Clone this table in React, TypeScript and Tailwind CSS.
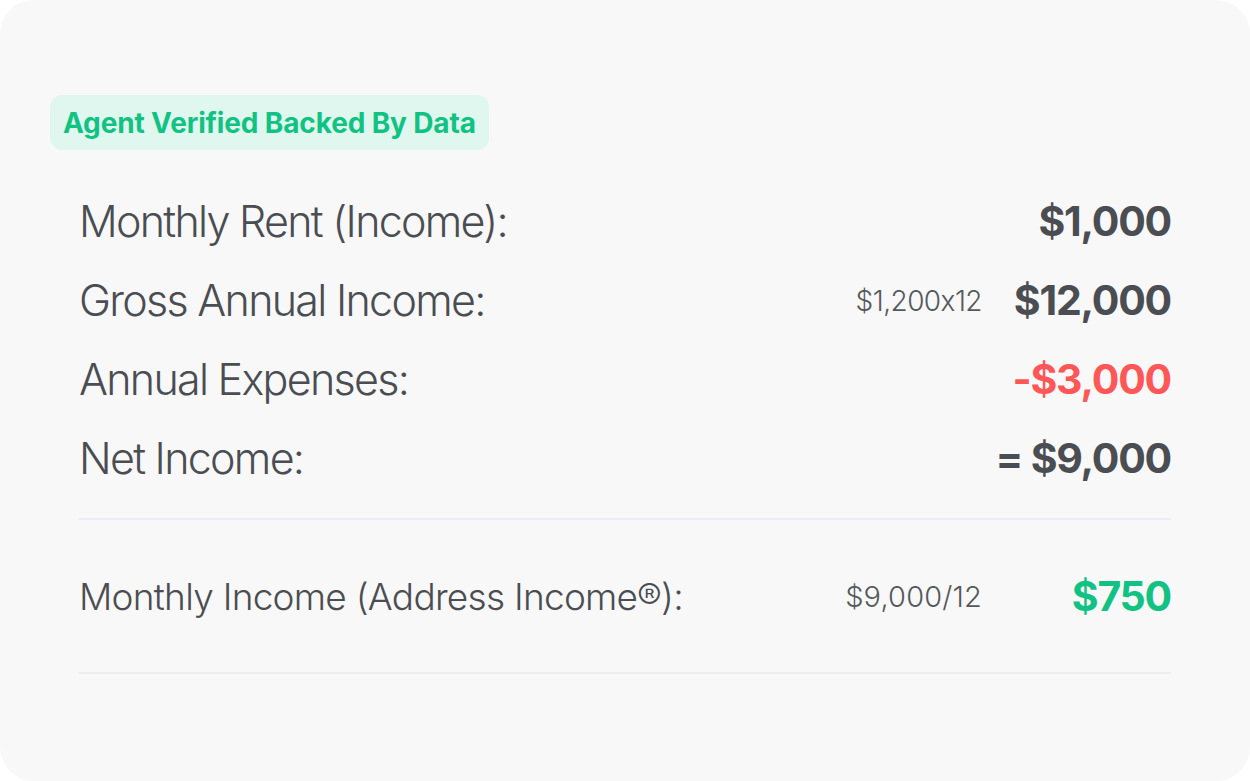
const rows = [
  { label: "Monthly Rent (Income):", note: "", value: "$1,000", tone: "text-[#4a4d52]" },
  { label: "Gross Annual Income:", note: "$1,200x12", value: "$12,000", tone: "text-[#4a4d52]" },
  { label: "Annual Expenses:", note: "", value: "-$3,000", tone: "text-[#ff5757]" },
  { label: "Net Income:", note: "", value: "= $9,000", tone: "text-[#4a4d52]" },
];

function Row({ label, note, value, tone, small }: { label: string; note: string; value: string; tone: string; small?: boolean }) {
  return (
    <div className="grid grid-cols-[1fr_auto_189px] items-center h-[79px]">
      <span
        className={
          small
            ? "text-[37px] font-light tracking-[-0.02em] text-[#4a4d52]"
            : "text-[43px] font-light tracking-[-0.04em] text-[#4a4d52]"
        }
      >
        {label}
      </span>
      <span
        className={
          small
            ? "text-[29px] font-light tracking-[0.005em] text-[#55585d]"
            : "text-[28px] font-light tracking-[-0.02em] text-[#55585d]"
        }
      >
        {note}
      </span>
      <span className={`text-right text-[41px] font-bold tracking-[-0.03em] ${tone}`}>{value}</span>
    </div>
  );
}

export default function App() {
  return (
    <div className="w-[1250px] h-[781px] bg-white" style={{ fontFamily: "Inter, 'Noto Sans', sans-serif" }}>
      <div className="w-full h-full rounded-[34px] bg-[#f8f8f8] flex flex-col">
        <div className="mt-[95px] ml-[50px] self-start h-[55px] px-[13px] rounded-[12px] bg-[#dff7ee] flex items-center">
          <span className="text-[28px] font-bold tracking-[-0.005em] text-[#12c283]">Agent Verified Backed By Data</span>
        </div>

        <div className="mx-[79px] mt-[32px] flex flex-col">
          {rows.map((r) => (
            <Row key={r.label} {...r} />
          ))}
          <div className="mt-[20px] h-[2px] bg-[#e8eef3]" />
          <div className="mt-[37px]">
            <Row small label="Monthly Income (Address Income®):" note="$9,000/12" value="$750" tone="text-[#12c283]" />
          </div>
          <div className="mt-[36px] h-[2px] bg-[#ebedef]" />
        </div>
      </div>
    </div>
  );
}
